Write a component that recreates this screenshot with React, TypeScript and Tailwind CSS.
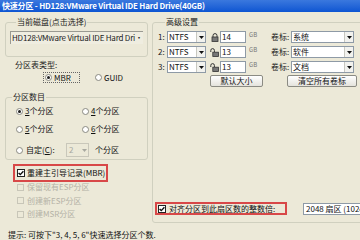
import React from "react";

function Radio({ checked = false }: { checked?: boolean }) {
  return (
    <span className="flex w-[7px] h-[7px] shrink-0 items-center justify-center rounded-full border border-[#8a8a82] bg-white">
      {checked ? <span className="block w-[3px] h-[3px] rounded-full bg-[#1e1e1e]" /> : null}
    </span>
  );
}

function Check({ checked = false, disabled = false }: { checked?: boolean; disabled?: boolean }) {
  return (
    <span
      className={
        disabled
          ? "flex w-[7px] h-[7px] shrink-0 items-center justify-center border border-[#c8c6b8] bg-[#ece9d8]"
          : "flex w-[8px] h-[8px] shrink-0 items-center justify-center border border-[#222222] bg-white"
      }
    >
      {checked ? (
        <svg width="6" height="6" viewBox="0 0 6 6">
          <path d="M0.6 2.9 L2.3 4.6 L5.4 1.2" stroke="#111" strokeWidth="1.4" fill="none" />
        </svg>
      ) : null}
    </span>
  );
}

function Arrow({ gray = false }: { gray?: boolean }) {
  return (
    <svg width="5" height="3" viewBox="0 0 5 3">
      <path d="M0 0 L5 0 L2.5 3 Z" fill={gray ? "#a8a8a0" : "#111"} />
    </svg>
  );
}

function Combo({ text, className }: { text: string; className: string }) {
  return (
    <div className={"flex h-[12px] border border-[#8e9aa6] bg-white " + className}>
      <span className="flex-1 overflow-hidden whitespace-nowrap pl-[1px] leading-[10px] text-[#111]">{text}</span>
      <span className="flex w-[9px] items-center justify-center border-l border-[#c8c8c0] bg-[#f2f2ee]">
        <Arrow />
      </span>
    </div>
  );
}

function LockClosed() {
  return (
    <svg width="8" height="9" viewBox="0 0 8 9">
      <path d="M2 4 V2.6 A2 2 0 0 1 6 2.6 V4" stroke="#333" strokeWidth="1" fill="none" />
      <rect x="1" y="4" width="6" height="4.5" fill="#777" stroke="#333" strokeWidth="0.8" />
    </svg>
  );
}

function LockOpen() {
  return (
    <svg width="9" height="9" viewBox="0 0 9 9">
      <path d="M0.8 4 V2.4 A1.8 1.8 0 0 1 4.4 2.4 V4" stroke="#333" strokeWidth="1" fill="none" />
      <rect x="2.8" y="4.2" width="5.6" height="4.3" fill="#777" stroke="#333" strokeWidth="0.8" />
    </svg>
  );
}

function PartRow({ n, size, label, locked }: { n: string; size: string; label: string; locked: boolean }) {
  return (
    <div className="flex h-[12px] items-center">
      <span className="w-[9px] text-[#222] leading-[10px]">{n}:</span>
      <Combo text="NTFS" className="w-[39px]" />
      <span className="ml-[4px] flex w-[9px] justify-center">{locked ? <LockClosed /> : <LockOpen />}</span>
      <div className="ml-[1px] h-[12px] w-[26px] border border-[#8e9aa6] bg-white pl-[1px] leading-[10px] text-[#111]">{size}</div>
      <span className="ml-[3px] w-[22px] self-start text-[6px] leading-[7px] text-[#777]">GB</span>
      <span className="w-[20px] leading-[10px] text-[#222]">卷标:</span>
      <Combo text={label} className="w-[63px]" />
    </div>
  );
}

function XPButton({ text, className }: { text: string; className: string }) {
  return (
    <div
      className={
        "flex h-[12px] items-center justify-center rounded-[2px] border border-[#8b8b83] bg-gradient-to-b from-[#ffffff] to-[#e4e3dc] leading-[10px] text-[#111] " +
        className
      }
    >
      {text}
    </div>
  );
}

export default function App() {
  return (
    <div className="w-[360px] h-[240px] overflow-hidden bg-[#ece9d8] font-['Noto_Sans_CJK_SC',sans-serif] text-[8px] text-[#111]">
      <div className="h-[12px] bg-gradient-to-b from-[#3a78de] to-[#0c55d2] pl-[2px] text-[8px] font-bold leading-[12px] tracking-[-0.2px] text-white whitespace-nowrap">
        快速分区 - HD128:VMware Virtual IDE Hard Drive(40GB)
      </div>
      <div className="flex items-start">
        {/* left column */}
        <div className="flex w-[152px] shrink-0 flex-col">
          <fieldset className="ml-[5px] mt-[5px] w-[143px] rounded-[3px] border border-[#d0d0bf] px-[4px] pb-[12px]">
            <legend className="ml-[6px] px-[1px] leading-[10px] text-[#222]">当前磁盘(点击选择)</legend>
            <div className="mt-[4px] h-[13px] overflow-hidden whitespace-nowrap border-l border-t border-[#9a9a92] bg-[#efede0] pl-[1px] leading-[12px] tracking-[-0.2px] text-[#222]">
              HD128:VMware Virtual IDE Hard Dri·
            </div>
          </fieldset>
          <div className="mt-[3px] pl-[15px] leading-[10px] text-[#222]">分区表类型:</div>
          <div className="mt-[2px] flex h-[11px] items-center">
            <div className="ml-[43px] flex h-[11px] w-[37px] items-center gap-[2px] border border-dotted border-[#666] pl-[1px]">
              <Radio checked />
              <span className="leading-[10px]">MBR</span>
            </div>
            <div className="ml-[15px] flex items-center gap-[2px]">
              <Radio />
              <span className="leading-[10px]">GUID</span>
            </div>
          </div>
          <fieldset className="ml-[5px] mt-[9px] w-[143px] rounded-[3px] border border-[#d0d0bf] pb-[2px]">
            <legend className="ml-[6px] px-[1px] leading-[10px] text-[#222]">分区数目</legend>
            <div className="mt-[4px] flex h-[10px] items-center pl-[10px]">
              <div className="flex w-[66px] items-center gap-[2px]">
                <Radio checked />
                <span className="leading-[10px]"><span className="underline">3</span>个分区</span>
              </div>
              <div className="flex items-center gap-[2px]">
                <Radio />
                <span className="leading-[10px]"><span className="underline">4</span>个分区</span>
              </div>
            </div>
            <div className="mt-[8px] flex h-[10px] items-center pl-[10px]">
              <div className="flex w-[66px] items-center gap-[2px]">
                <Radio />
                <span className="leading-[10px]"><span className="underline">5</span>个分区</span>
              </div>
              <div className="flex items-center gap-[2px]">
                <Radio />
                <span className="leading-[10px]"><span className="underline">6</span>个分区</span>
              </div>
            </div>
            <div className="mt-[9px] flex h-[14px] items-center pl-[10px]">
              <Radio />
              <span className="ml-[3px] w-[40px] leading-[10px]">自定(<span className="underline">C</span>):</span>
              <div className="flex h-[14px] w-[23px] border border-[#c9c7ba] bg-[#ece9d8]">
                <span className="flex-1 pl-[2px] leading-[12px] text-[#a8a8a0]">2</span>
                <span className="flex w-[8px] items-center justify-center">
                  <Arrow gray />
                </span>
              </div>
              <span className="ml-[6px] leading-[10px]">个分区</span>
            </div>
          </fieldset>
          <div className="ml-[13px] mt-[4px] flex h-[18px] w-[95px] items-center border-2 border-[#d84848] pl-[2px]">
            <Check checked />
            <span className="ml-[2px] leading-[10px]">重建主引导记录(MBR)</span>
          </div>
          <div className="flex flex-col">
            <div className="flex h-[10px] items-center pl-[17px]">
              <Check disabled />
              <span className="ml-[3px] leading-[10px] text-[#b4b2a6]">保留现有ESP分区</span>
            </div>
            <div className="mt-[3.5px] flex h-[10px] items-center pl-[17px]">
              <Check disabled />
              <span className="ml-[3px] leading-[10px] text-[#b4b2a6]">创建新ESP分区</span>
            </div>
            <div className="mt-[3.5px] flex h-[10px] items-center pl-[17px]">
              <Check disabled />
              <span className="ml-[3px] leading-[10px] text-[#b4b2a6]">创建MSR分区</span>
            </div>
          </div>
        </div>
        {/* right column */}
        <fieldset className="mt-[5px] flex h-[206px] w-[212px] shrink-0 flex-col rounded-[3px] border border-[#d0d0bf] pl-[5px]">
          <legend className="ml-[7px] px-[1px] leading-[10px] text-[#222]">高级设置</legend>
          <div className="mt-[4px] flex flex-col gap-[3px]">
            <PartRow n="1" size="14" label="系统" locked />
            <PartRow n="2" size="13" label="软件" locked={false} />
            <PartRow n="3" size="13" label="文档" locked={false} />
          </div>
          <div className="mt-[2px] flex h-[12px]">
            <XPButton text="默认大小" className="ml-[52px] w-[53px]" />
            <XPButton text="清空所有卷标" className="ml-[24px] w-[70px]" />
          </div>
          <div className="mt-[115px] flex h-[13px] items-center">
            <div className="-ml-[3px] flex h-[13px] w-[132px] items-center border-2 border-[#d84848] pl-[1px]">
              <Check checked />
              <span className="ml-[3px] whitespace-nowrap leading-[10px]">对齐分区到此扇区数的整数倍:</span>
            </div>
            <div className="ml-[16px] h-[12px] w-[70px] overflow-hidden whitespace-nowrap border border-[#8e9aa6] bg-white pl-[2px] leading-[10px]">
              2048 扇区 (1024KB)
            </div>
          </div>
        </fieldset>
      </div>
      <div className="mt-[7px] whitespace-nowrap pl-[8px] leading-[10px] text-[#111]">
        提示: 可按下"3, 4, 5, 6"快速选择分区个数.
      </div>
    </div>
  );
}
